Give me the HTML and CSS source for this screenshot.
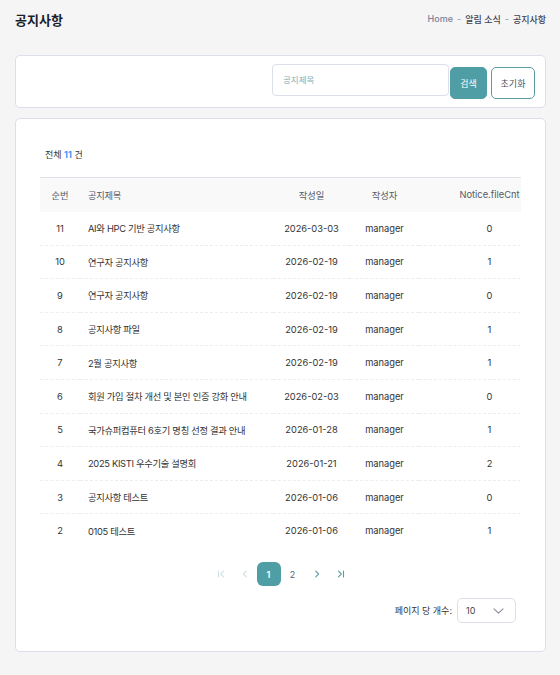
FILE: index.html
```html
<!DOCTYPE html>
<html lang="ko">

<head>
    <meta charset="UTF-8">
    <meta name="viewport" content="width=device-width, initial-scale=1.0">
    <title>공지사항</title>

    <link rel="stylesheet" href="styles.css">
</head>

<body>
    <div class="page">
        <div class="page-header">
            <h1 class="page-title">공지사항</h1>
            <div class="breadcrumb">
                <span class="crumb-home">Home</span>
                <span class="crumb-sep">-</span>
                <span>알림 소식</span>
                <span class="crumb-sep">-</span>
                <span>공지사항</span>
            </div>
        </div>

        <div class="search-box">
            <input class="search-input" type="text" placeholder="공지제목">
            <button class="search-button">검색</button>
            <button class="reset-button">초기화</button>
        </div>

        <div class="list-box">
            <div class="total">전체 <b>11</b> 건</div>

            <div class="table-wrap">
                <table class="notice-table">
                    <colgroup>
                        <col style="width: 40px">
                        <col style="width: 193px">
                        <col style="width: 77px">
                        <col style="width: 69px">
                        <col style="width: 141px">
                    </colgroup>
                    <thead>
                        <tr>
                            <th>순번</th>
                            <th class="left">공지제목</th>
                            <th>작성일</th>
                            <th>작성자</th>
                            <th>Notice.fileCnt</th>
                        </tr>
                    </thead>
                    <tbody>
                        <tr><td>11</td><td class="left">AI와 HPC 기반 공지사항</td><td>2026-03-03</td><td>manager</td><td>0</td></tr>
                        <tr><td>10</td><td class="left">연구자 공지사항</td><td>2026-02-19</td><td>manager</td><td>1</td></tr>
                        <tr><td>9</td><td class="left">연구자 공지사항</td><td>2026-02-19</td><td>manager</td><td>0</td></tr>
                        <tr><td>8</td><td class="left">공지사항 파일</td><td>2026-02-19</td><td>manager</td><td>1</td></tr>
                        <tr><td>7</td><td class="left">2월 공지사항</td><td>2026-02-19</td><td>manager</td><td>1</td></tr>
                        <tr><td>6</td><td class="left">회원 가입 절차 개선 및 본인 인증 강화 안내</td><td>2026-02-03</td><td>manager</td><td>0</td></tr>
                        <tr><td>5</td><td class="left">국가슈퍼컴퓨터 6호기 명칭 선정 결과 안내</td><td>2026-01-28</td><td>manager</td><td>1</td></tr>
                        <tr><td>4</td><td class="left">2025 KISTI 우수기술 설명회</td><td>2026-01-21</td><td>manager</td><td>2</td></tr>
                        <tr><td>3</td><td class="left">공지사항 테스트</td><td>2026-01-06</td><td>manager</td><td>0</td></tr>
                        <tr><td>2</td><td class="left">0105 테스트</td><td>2026-01-06</td><td>manager</td><td>1</td></tr>
                    </tbody>
                </table>
            </div>

            <div class="pagination">
                <span class="page-item disabled">
                    <svg width="8" height="8" viewBox="0 0 8 8"><path d="M1.5 1v6M6.5 1.2L3.7 4l2.8 2.8" fill="none" stroke="currentColor" stroke-width="1.1" stroke-linecap="round" stroke-linejoin="round"/></svg>
                </span>
                <span class="page-item disabled">
                    <svg width="8" height="8" viewBox="0 0 8 8"><path d="M5.2 1.2L2.4 4l2.8 2.8" fill="none" stroke="currentColor" stroke-width="1.1" stroke-linecap="round" stroke-linejoin="round"/></svg>
                </span>
                <span class="page-item active">1</span>
                <span class="page-item">2</span>
                <span class="page-item arrow">
                    <svg width="8" height="8" viewBox="0 0 8 8"><path d="M2.8 1.2L5.6 4 2.8 6.8" fill="none" stroke="currentColor" stroke-width="1.1" stroke-linecap="round" stroke-linejoin="round"/></svg>
                </span>
                <span class="page-item arrow">
                    <svg width="8" height="8" viewBox="0 0 8 8"><path d="M1.5 1.2L4.3 4 1.5 6.8M6.5 1v6" fill="none" stroke="currentColor" stroke-width="1.1" stroke-linecap="round" stroke-linejoin="round"/></svg>
                </span>
            </div>

            <div class="per-page">
                <span>페이지 당 개수:</span>
                <div class="per-page-select">
                    <span>10</span>
                    <svg width="11" height="6" viewBox="0 0 11 6"><path d="M1 0.8l4.5 4.4L10 0.8" fill="none" stroke="#8a8f9c" stroke-width="1.1" stroke-linecap="round" stroke-linejoin="round"/></svg>
                </div>
            </div>
        </div>
    </div>
</body>

</html>
```

FILE: styles.css
```css
body {
    margin: 0;
    background-color: #f5f5f5;
    font-family: Inter, "Noto Sans CJK KR", sans-serif;
    color: #333;
}

.page {
    padding: 0 14px 0 15px;
}

.page-header {
    height: 38px;
    display: flex;
    justify-content: space-between;
    align-items: center;
}

.page-title {
    margin: 0;
    font-size: 13px;
    font-weight: 700;
    color: #1b1f2b;
}

.breadcrumb {
    font-size: 9px;
    font-weight: 500;
    color: #3f4254;
    display: flex;
    gap: 4px;
}

.crumb-home {
    color: #78829d;
}

.crumb-sep {
    color: #99a1b7;
}

.search-box {
    margin-top: 17px;
    height: 53px;
    box-sizing: border-box;
    background-color: #fff;
    border: 1px solid #dbdfe9;
    border-radius: 5px;
    padding: 8px 10px 0 0;
    display: flex;
    justify-content: flex-end;
    align-items: flex-start;
}

.search-input {
    width: 177px;
    height: 32px;
    box-sizing: border-box;
    border: 1px solid #dbdfe9;
    border-radius: 4px;
    padding: 0 10px;
    font-family: inherit;
    font-size: 8.5px;
    outline: none;
}

.search-input::placeholder {
    color: #7fb0b5;
}

.search-button,
.reset-button {
    height: 32px;
    margin-top: 3px;
    box-sizing: border-box;
    border-radius: 5px;
    font-family: inherit;
    font-size: 9px;
    padding: 0;
    cursor: pointer;
}

.search-button {
    width: 37px;
    margin-left: 1px;
    background-color: #4f9ea6;
    border: 1px solid #4f9ea6;
    color: #fff;
}

.reset-button {
    width: 44px;
    margin-left: 4px;
    background-color: #fff;
    border: 1px solid #5a9ea5;
    color: #4b5060;
}

.list-box {
    margin-top: 10px;
    height: 534px;
    box-sizing: border-box;
    background-color: #fff;
    border: 1px solid #dbdfe9;
    border-radius: 5px;
    padding: 29px 24px 0;
}

.total {
    height: 14px;
    line-height: 14px;
    padding-left: 5px;
    font-size: 9px;
    color: #333;
}

.total b {
    color: #3e97ff;
    font-weight: 700;
}

.table-wrap {
    margin-top: 15px;
    overflow: hidden;
}

.notice-table {
    width: 520px;
    border-collapse: collapse;
    table-layout: fixed;
    font-size: 9.3px;
}

.notice-table th,
.notice-table td {
    padding: 0;
    text-align: center;
    white-space: nowrap;
}

.notice-table .left {
    text-align: left;
    padding-left: 8px;
    letter-spacing: -0.3px;
}

.notice-table thead tr {
    height: 34px;
    background-color: #f9f9f9;
    border-top: 1px solid #e1e3ea;
}

.notice-table th {
    font-weight: 400;
    color: #555a66;
}

.notice-table tbody tr {
    height: 33.6px;
}

.notice-table tbody tr + tr td {
    border-top: 1px dashed #eceef3;
}

.notice-table td {
    color: #333;
}

.pagination {
    margin-top: 15px;
    display: flex;
    justify-content: center;
}

.page-item {
    width: 24px;
    height: 24px;
    border-radius: 6px;
    display: flex;
    justify-content: center;
    align-items: center;
    font-size: 9px;
    color: #5b6472;
}

.page-item.active {
    background-color: #4f9ea6;
    color: #fff;
    font-weight: 600;
}

.page-item.disabled {
    color: #cfe2e4;
}

.page-item.arrow {
    color: #5d9aa0;
}

.per-page {
    margin-top: 12px;
    padding-right: 5px;
    display: flex;
    justify-content: flex-end;
    align-items: center;
    gap: 5px;
    font-size: 9px;
    color: #333;
}

.per-page-select {
    width: 59px;
    height: 25px;
    box-sizing: border-box;
    border: 1px solid #dbdfe9;
    border-radius: 5px;
    padding: 0 11px 0 8px;
    display: flex;
    justify-content: space-between;
    align-items: center;
    color: #444;
}
```
